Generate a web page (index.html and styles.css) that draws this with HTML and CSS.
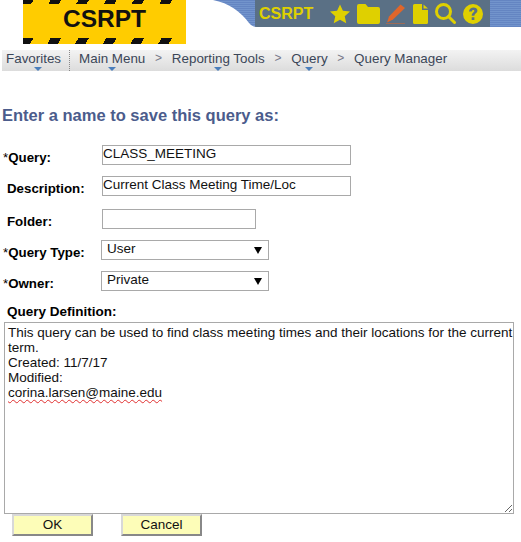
FILE: index.html
```html
<!DOCTYPE html>
<html lang="en">

<head>
	<meta charset="UTF-8" />
	<title>Query Manager</title>
	<link rel="stylesheet" href="styles.css">
</head>

<body>
	<header class="header">
		<div class="logo">CSRPT</div>
		<div class="band">
			<div class="toolbar">
				<span class="db-name">CSRPT</span>
				<svg class="icon star" viewBox="0 0 22 21"><path d="M11 0l3.2 7 7.8.8-5.8 5.2 1.7 7.7L11 16.7l-6.9 4 1.7-7.7L0 7.8 7.8 7z" /></svg>
				<svg class="icon folder" viewBox="0 0 23 20"><path d="M2 0h6.500l2.500 3h10a2 2 0 0 1 2 2v13a2 2 0 0 1-2 2H2a2 2 0 0 1-2-2V2a2 2 0 0 1 2-2z" /></svg>
				<svg class="icon pencil" viewBox="0 0 20 20"><path d="M14.500 0.500l4.500 3.500L7 15.500l-6 3 2-6z" /><path d="M0 19.500h19v1H0z" /></svg>
				<svg class="icon doc" viewBox="0 0 15 20"><path d="M1.500 0H9v6h6v12.500a1.500 1.500 0 0 1-1.500 1.500h-12A1.500 1.500 0 0 1 0 18.500v-17A1.500 1.500 0 0 1 1.500 0zM10.500 0.500L15 4.500h-4.500z" /></svg>
				<svg class="icon lens" viewBox="0 0 21 21"><circle cx="8.500" cy="8.500" r="7" fill="none" stroke="#dfd000" stroke-width="3" /><path d="M13.500 13.500l6 6" fill="none" stroke="#dfd000" stroke-width="3" stroke-linecap="round" /></svg>
				<svg class="icon help" viewBox="0 0 20 20"><path fill-rule="evenodd" d="M10 0a10 10 0 1 1 0 20a10 10 0 0 1 0-20zM6 7.500h2.800c0-2 2.600-2 2.600-.5 0 1.300-2.700 1.800-2.700 4.800h2.700c0-2 3-2.600 3-5.200C14.400 2.500 6.300 2.400 6 7.500zM8.700 13.200V16h2.700v-2.800z" /></svg>
			</div>
		</div>
	</header>

	<nav class="crumbs">
		<a class="crumb crumb-fav has-menu">Favorites</a>
		<a class="crumb crumb-main has-menu">Main Menu</a>
		<span class="sep">&gt;</span>
		<a class="crumb has-menu">Reporting Tools</a>
		<span class="sep">&gt;</span>
		<a class="crumb has-menu">Query</a>
		<span class="sep">&gt;</span>
		<a class="crumb">Query Manager</a>
	</nav>

	<main class="page">
		<h1 class="title">Enter a name to save this query as:</h1>

		<div class="row row-query">
			<label class="label"><span class="req">*</span>Query:</label>
			<input class="field field-long" type="text" value="CLASS_MEETING" />
		</div>
		<div class="row row-desc">
			<label class="label label-plain">Description:</label>
			<input class="field field-long" type="text" value="Current Class Meeting Time/Loc" />
		</div>
		<div class="row row-folder">
			<label class="label label-plain">Folder:</label>
			<input class="field field-short" type="text" />
		</div>
		<div class="row row-type">
			<label class="label"><span class="req">*</span>Query Type:</label>
			<select class="pick"><option>User</option></select>
		</div>
		<div class="row row-owner">
			<label class="label"><span class="req">*</span>Owner:</label>
			<select class="pick"><option>Private</option></select>
		</div>

		<div class="def-label">Query Definition:</div>
		<div class="definition">This query can be used to find class meeting times and their locations for the current term.<br>Created: 11/7/17<br>Modified:<br><span class="misspelt">corina.larsen@maine.edu</span></div>

		<div class="actions">
			<button class="btn">OK</button>
			<button class="btn">Cancel</button>
		</div>
	</main>
</body>

</html>
```

FILE: styles.css
```css
* {
	box-sizing: border-box;
}

body {
	margin: 0;
	background: #fff;
	color: #000;
	font-family: 'Liberation Sans', Arial, sans-serif;
	font-size: 13.4px;
	overflow: hidden;
}

/* header */
.header {
	display: flex;
	align-items: flex-start;
	height: 50px;
}

.logo {
	width: 163px;
	height: 44px;
	margin-left: 23px;
	padding-top: 5px;
	background-color: #fc0;
	background-image:
		repeating-linear-gradient(120deg, #111 0 9px, #fc0 9px 24px),
		repeating-linear-gradient(120deg, #111 0 9px, #fc0 9px 24px);
	background-size: 100% 4px, 100% 6px;
	background-position: top left, bottom left;
	background-repeat: no-repeat;
	color: #111;
	font-size: 24.5px;
	font-weight: bold;
	line-height: 28px;
	text-align: center;
}

.band {
	flex: 1;
	height: 27px;
	margin-left: 27px;
	padding-left: 42px;
	background: repeating-linear-gradient(#6485c2 0 1px, #7294cc 1px 2px);
	clip-path: path('M0 0 C 16 3, 28 12, 36 23 Q 39 27 44 27 L 308 27 L 308 0 Z');
}

.toolbar {
	display: flex;
	align-items: center;
	width: 235px;
	height: 27px;
	background: #5a7085;
}

.db-name {
	width: 75px;
	padding-left: 4px;
	color: #dfd000;
	font-size: 16px;
	font-weight: bold;
}

.icon {
	flex: none;
	fill: #dfd000;
}

.star {
	width: 20px;
	height: 20px;
}

.folder {
	width: 23px;
	height: 20px;
	margin-left: 7px;
}

.pencil {
	width: 20px;
	height: 20px;
	margin-left: 6px;
	fill: #e0662a;
}

.doc {
	width: 15px;
	height: 20px;
	margin-left: 7px;
}

.lens {
	width: 21px;
	height: 21px;
	margin-left: 7px;
}

.help {
	width: 20px;
	height: 20px;
	margin-left: 7px;
}

/* breadcrumb bar */
.crumbs {
	display: flex;
	align-items: flex-start;
	height: 21px;
	margin-left: 2px;
	background: linear-gradient(#f3f3f3, #dcdcdc);
	color: #3b4658;
	line-height: 17px;
}

.crumb {
	position: relative;
	display: block;
	height: 21px;
}

.crumb-fav {
	margin-left: 4px;
	padding-right: 8px;
	border-right: 1px dotted #888;
}

.crumb-main {
	margin-left: 9px;
}

.has-menu::after {
	content: "";
	position: absolute;
	left: 50%;
	bottom: 0;
	margin-left: -4px;
	border: 4px solid transparent;
	border-bottom: 0;
	border-top-color: #4a7ebb;
}

.sep {
	width: 26.500px;
	color: #778;
	font-size: 12px;
	text-align: center;
}

/* form */
.page {
	padding: 0 0 0 2px;
}

.title {
	margin: 35px 0 0;
	color: #4b5c8c;
	font-size: 16.500px;
	font-weight: bold;
	line-height: 18px;
}

.row {
	display: flex;
	align-items: flex-start;
}

.row-query {
	margin-top: 21px;
}

.row-desc {
	margin-top: 11px;
}

.row-folder {
	margin-top: 13px;
}

.row-type {
	margin-top: 11px;
}

.row-owner {
	margin-top: 11px;
}

.label {
	width: 100px;
	height: 20px;
	padding: 5px 0 0 1px;
	font-size: 13.300px;
	font-weight: bold;
	line-height: 16px;
}

.label-plain {
	padding-left: 5px;
}

.req {
	font-weight: normal;
}

.field {
	height: 20px;
	padding: 0 0 3px 0;
	border: 1px solid #a9a9a9;
	color: #111;
	font: 13.500px 'Liberation Sans', Arial, sans-serif;
}

.field-long {
	width: 249px;
}

.field-short {
	width: 154px;
}

.pick {
	appearance: none;
	width: 168px;
	height: 20px;
	margin-left: -1px;
	padding: 0 0 3px 5px;
	border: 1px solid #a9a9a9;
	border-radius: 0;
	background: #fff url("data:image/svg+xml,%3Csvg xmlns='http://www.w3.org/2000/svg' width='8' height='8'%3E%3Cpath d='M0 1h8L4 8z'/%3E%3C/svg%3E") no-repeat 152px 5px;
	color: #111;
	font: 13.500px 'Liberation Sans', Arial, sans-serif;
}

.def-label {
	margin: 13px 0 0 5px;
	font-size: 13.500px;
	font-weight: bold;
	line-height: 16px;
}

.definition {
	width: 510px;
	height: 192px;
	margin: 2px 0 0 2px;
	padding: 2px 0 0 3px;
	overflow: hidden;
	resize: both;
	border: 1px solid #a9a9a9;
	color: #111;
	font-size: 13.500px;
	line-height: 15px;
}

.misspelt {
	text-decoration: underline wavy #e03030 1px;
	text-underline-offset: 2px;
}

.actions {
	display: flex;
	gap: 28px;
	margin-left: 10px;
}

.btn {
	width: 81px;
	height: 22px;
	padding: 0 0 2px;
	border: 2px solid;
	border-color: #d8d8d8 #888 #888 #d8d8d8;
	background: #fdfdb8;
	color: #111;
	font: 13.500px 'Liberation Sans', Arial, sans-serif;
}
```
